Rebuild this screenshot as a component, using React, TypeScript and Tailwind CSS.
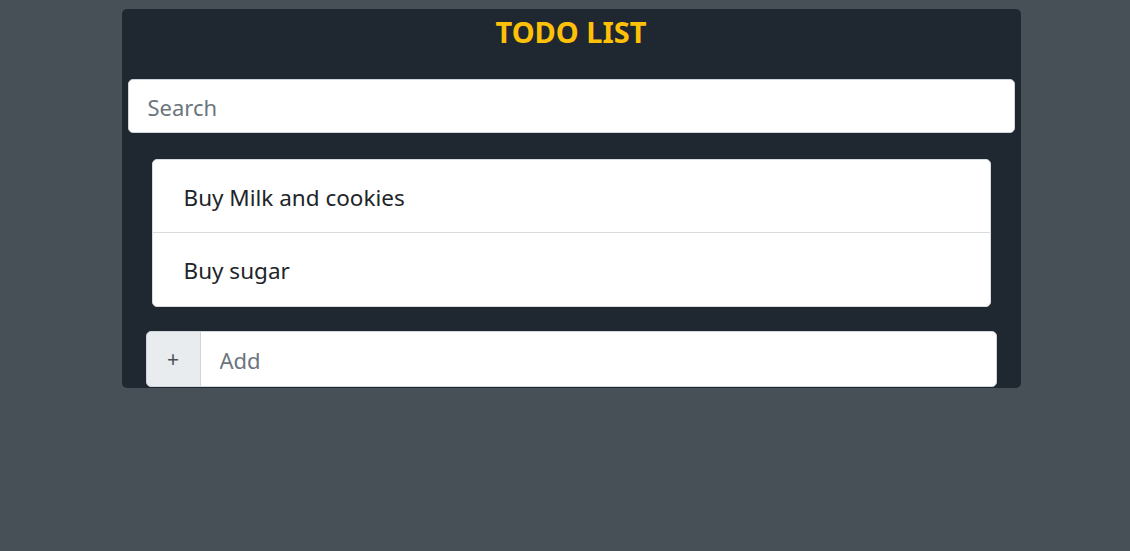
import React, { useState } from "react";

type Todo = { id: number; text: string };

const initialTodos: Todo[] = [
    { id: 1, text: "Buy Milk and cookies" },
    { id: 2, text: "Buy sugar" },
];

function App() {
    const [todos] = useState<Todo[]>(initialTodos);

    return (
        <div className="min-h-screen bg-[#474f57] pl-[12px] pt-[9px] font-['Noto_Sans',sans-serif]">
            <div className="mx-auto flex h-[379px] w-[899px] flex-col rounded-[5px] bg-[#1f2831]">
                <h1 className="mt-[5px] text-center text-[29px] font-bold leading-[36px] text-[#ffc107]">
                    TODO LIST
                </h1>
                <input
                    type="text"
                    placeholder="Search"
                    className="mx-[6px] mt-[29px] h-[54px] rounded-[5px] border border-[#ced4da] bg-white px-[19px] pt-[2px] text-[22px] text-[#495057] outline-none placeholder:text-[#6c757d]"
                />
                <ul className="mx-[30px] mt-[26px] rounded-[5px] border border-[#d9dcdf] bg-white">
                    {todos.map((todo, index) => (
                        <li
                            key={todo.id}
                            className={
                                index < todos.length - 1
                                    ? "flex h-[73px] items-center border-b border-[#d9dcdf] px-[31px] pt-[3px] text-[22.5px] text-[#212529]"
                                    : "flex h-[73px] items-center px-[31px] pt-[3px] text-[22.5px] text-[#212529]"
                            }
                        >
                            {todo.text}
                        </li>
                    ))}
                </ul>
                <div className="mx-[24px] mt-[24px] flex h-[56px]">
                    <button className="w-[55px] rounded-l-[5px] border border-[#ced4da] bg-[#e9ecef] pt-[2px] text-[21px] text-[#495057]">
                        +
                    </button>
                    <input
                        type="text"
                        placeholder="Add"
                        className="-ml-px flex-1 rounded-r-[5px] border border-[#ced4da] bg-white px-[19px] pt-[2px] text-[22px] text-[#495057] outline-none placeholder:text-[#6c757d]"
                    />
                </div>
            </div>
        </div>
    );
}

export default App;
